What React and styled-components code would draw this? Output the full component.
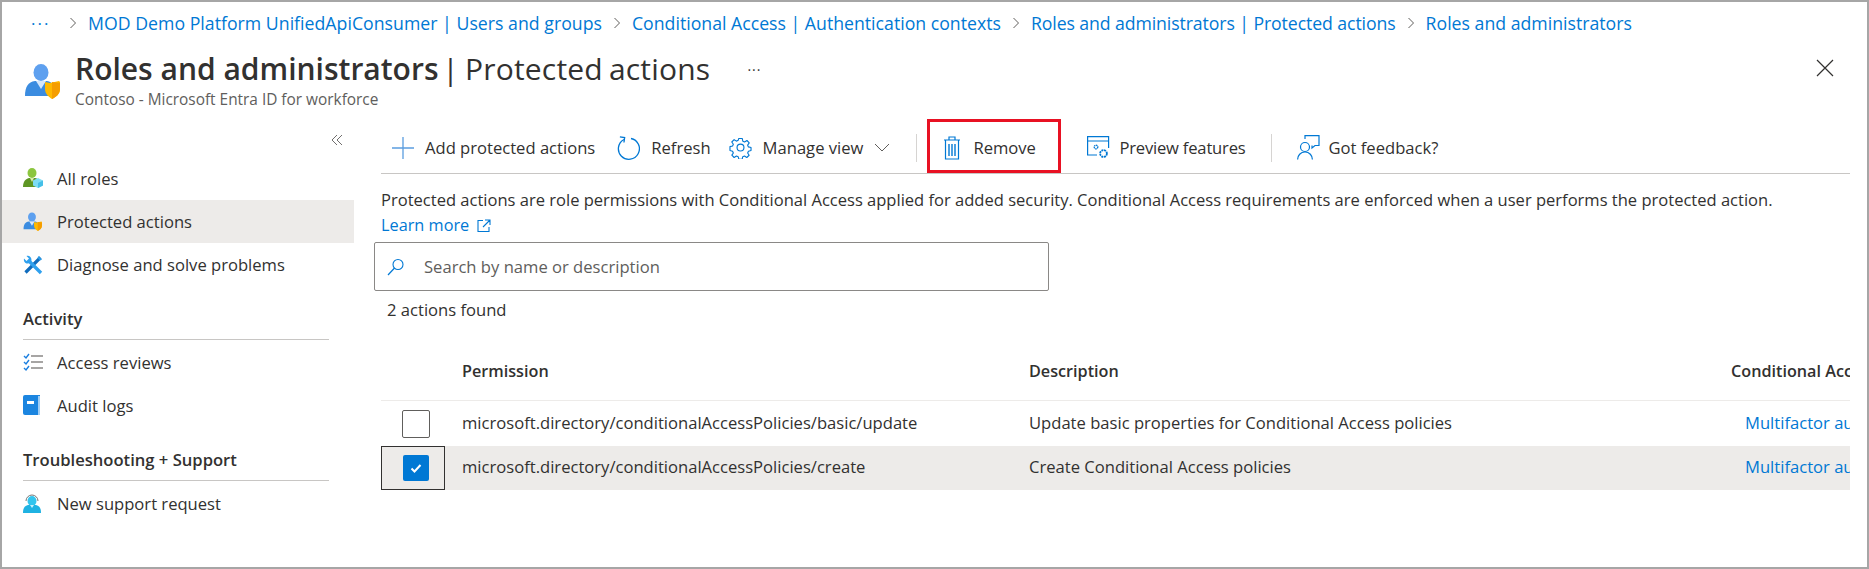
import React from 'react'
import styled, { createGlobalStyle } from 'styled-components'

const GlobalStyle = createGlobalStyle`
  html, body {
    margin: 0;
    padding: 0;
    background: #fff;
  }
  body {
    font-family: "Open Sans", "Liberation Sans", sans-serif;
    font-size: 16.6px;
    color: #323130;
  }
`

const Frame = styled.div`
  box-sizing: border-box;
  width: 1869px;
  height: 569px;
  border: 2px solid #a6a6a6;
  display: flex;
  flex-direction: column;
  overflow: hidden;
  background: #fff;
`

const Breadcrumbs = styled.nav`
  display: flex;
  align-items: center;
  height: 42px;
  padding-left: 29px;
  flex-shrink: 0;
  font-size: 17.7px;
`

const Dots = styled.span`
  color: #0078d4;
  font-size: 17px;
  letter-spacing: 2px;
  line-height: 1;
  width: 27px;
`

const Crumb = styled.a`
  color: #0078d4;
  white-space: nowrap;
  letter-spacing: ${p => p.$track || 0}px;
`

const CrumbSep = styled.span`
  display: flex;
  width: 30px;
  justify-content: center;
  color: #605e5c;
`

const Header = styled.header`
  display: flex;
  align-items: flex-start;
  height: 74px;
  flex-shrink: 0;
  padding-left: 22px;
`

const HeaderIcon = styled.div`
  width: 51px;
  padding-top: 19px;
`

const TitleBlock = styled.div`
  display: flex;
  flex-direction: column;
`

const TitleRow = styled.div`
  display: flex;
  align-items: center;
`

const Title = styled.h1`
  margin: 0;
  font-size: 30px;
  line-height: 50px;
  font-weight: 400;
  color: #323130;
  white-space: nowrap;
`

const Strong = styled.span`
  font-weight: 600;
`

const TitleRest = styled.span`
  margin-left: -4px;
  word-spacing: -2px;
  letter-spacing: 0.2px;
`

const Subtitle = styled.div`
  font-size: 15.4px;
  line-height: 18px;
  margin-top: -3px;
  color: #605e5c;
`

const More = styled.span`
  margin-left: 37px;
  font-size: 14px;
  letter-spacing: 1px;
  color: #323130;
`

const CloseButton = styled.button`
  margin-left: auto;
  margin-right: 33px;
  margin-top: 15px;
  padding: 0;
  border: 0;
  background: none;
  display: flex;
`

const Body = styled.div`
  flex: 1;
  display: flex;
  min-height: 0;
`

const Sidebar = styled.aside`
  width: 352px;
  flex-shrink: 0;
  display: flex;
  flex-direction: column;
`

const Collapse = styled.div`
  display: flex;
  justify-content: flex-end;
  height: 39px;
  padding: 16px 11px 0 0;
  box-sizing: border-box;
`

const NavItem = styled.a`
  display: flex;
  align-items: center;
  height: 43px;
  flex-shrink: 0;
  padding-left: 21px;
  background: ${p => (p.$active ? '#edebe9' : 'transparent')};
  white-space: nowrap;
`

const NavIcon = styled.span`
  display: flex;
  width: 34px;
`

const SectionTitle = styled.div`
  margin: 21px 25px 1px 21px;
  height: 32px;
  border-bottom: 1px solid #c8c6c4;
  font-weight: 600;
  line-height: 24px;
`

const Main = styled.main`
  flex: 1;
  min-width: 0;
  display: flex;
  flex-direction: column;
  padding: 0 17px 0 27px;
`

const Toolbar = styled.div`
  display: flex;
  align-items: center;
  height: 55px;
  margin-top: 1px;
  flex-shrink: 0;
  border-bottom: 1px solid #c8c6c4;
  box-sizing: border-box;
`

const ToolButton = styled.button`
  display: flex;
  align-items: center;
  gap: ${p => p.$gap || 11}px;
  padding: 3px 0 0;
  margin-left: ${p => p.$left || 0}px;
  border: 0;
  background: none;
  font: inherit;
  letter-spacing: ${p => p.$track || 0}px;
  color: #323130;
  white-space: nowrap;
`

const RemoveButton = styled(ToolButton)`
  box-sizing: border-box;
  height: 54px;
  width: 134px;
  padding: 3px 0 0 13px;
  gap: 12px;
  border: 3px solid #e81123;
`

const ToolSep = styled.span`
  width: 1px;
  height: 28px;
  margin-top: 3px;
  background: #d6d4d2;
  margin-left: ${p => p.$left}px;
`

const Description = styled.p`
  margin: 13px 0 0;
  line-height: 25px;
  white-space: nowrap;
  font-size: 16.55px;
`

const Link = styled.a`
  color: #0078d4;
  white-space: nowrap;
`

const LearnMore = styled(Link)`
  display: inline-flex;
  align-items: center;
  gap: 8px;
  font-size: 16.3px;
`

const SearchBox = styled.div`
  box-sizing: border-box;
  display: flex;
  align-items: center;
  gap: 19px;
  width: 675px;
  height: 49px;
  margin: 4px 0 0 -7px;
  padding-left: 12px;
  border: 1px solid #8a8886;
  border-radius: 2px;
  color: #605e5c;
`

const ResultCount = styled.div`
  margin: 7px 0 0 6px;
  line-height: 24px;
`

const Table = styled.div`
  margin-top: 31px;
  overflow: hidden;
`

const Row = styled.div`
  display: grid;
  grid-template-columns: 64px 567px 702px 400px;
  height: ${p => p.$height}px;
  align-items: center;
  white-space: nowrap;
  background: ${p => (p.$selected ? '#edebe9' : 'transparent')};
  box-sizing: border-box;
`

const HeaderRow = styled(Row)`
  border-bottom: 1px solid #edebe9;
  padding-bottom: 12px;
  font-size: 16.2px;
  font-weight: 600;
`

const Cell = styled.div`
  padding-left: 17px;
`

const BodyCell = styled(Cell)`
  margin-bottom: 3px;
`

const LinkCell = styled(BodyCell)`
  padding-left: 31px;
`

const CheckCell = styled.div`
  height: 100%;
  box-sizing: border-box;
  display: flex;
  align-items: center;
  justify-content: center;
  padding-left: 5px;
  border: ${p => (p.$focus ? '1px solid #323130' : '0')};
`

const Checkbox = styled.span`
  box-sizing: border-box;
  display: flex;
  align-items: center;
  justify-content: center;
  width: ${p => (p.$checked ? 26 : 28)}px;
  height: ${p => (p.$checked ? 26 : 28)}px;
  border-radius: 2px;
  background: ${p => (p.$checked ? '#0078d4' : '#fff')};
  border: ${p => (p.$checked ? '0' : '1px solid #605e5c')};
`

const Svg = ({ size = 16, w, h, box, children }) => (
  <svg width={w || size} height={h || size} viewBox={box || `0 0 ${size} ${size}`} fill="none">
    {children}
  </svg>
)

const Chevron = () => (
  <Svg size={12}>
    <path d="M3.500 1l5 5-5 5" stroke="#605e5c" strokeWidth="1" />
  </Svg>
)

const PersonShield = ({ size = 38 }) => (
  <Svg w={size} h={size} box="0 0 38 38">
    <ellipse cx="17" cy="9.500" rx="7.500" ry="8.500" fill="#5ea0ef" />
    <path d="M1 33c0-9 3-14 10-15h12c3 .5 5 2 7 5v10H1z" fill="#3b8ce0" />
    <path d="M12 18h10l-5 8z" fill="#d5e7fb" />
    <path d="M26 20l9-2 1 1v7c0 5-4 8-8 10-3-2-7-5-7-10v-7z" fill="#ffb900" />
    <path d="M28 19l8 1v6c0 5-4 8-8 10z" fill="#f59d00" />
  </Svg>
)

const NavPerson = () => <PersonShield size={20} />

const RolesIcon = () => (
  <Svg w={21} h={21} box="0 0 21 21">
    <ellipse cx="9" cy="5" rx="4.500" ry="5" fill="#8cc63f" />
    <path d="M0 19c0-5 2-8 6-9h6c2 .4 3 1 4 3v6z" fill="#5e9624" />
    <path d="M7 10h4l-2 4z" fill="#d9eeb0" />
    <path d="M15 10l5 2.500v5L15 20l-5-2.500v-5z" fill="#7ddcf5" />
    <path d="M15 15l5-2.500v5L15 20z" fill="#45bfe8" />
  </Svg>
)

const WrenchIcon = () => (
  <Svg w={20} h={20} box="0 0 20 20">
    <path d="M17.500 2.500L2.500 17.500" stroke="#0f6cbd" strokeWidth="3.200" />
    <path d="M15.500 1l3.500 3.500-2 1-2.500-2.500z" fill="#2a9de8" />
    <path d="M6 6l12 12" stroke="#2fa0ee" strokeWidth="3.400" />
    <path d="M1 3.500L3.500 6 6 3.500 3.500 1C6 .200 8.500 2 8.500 5c0 2.500-2.500 4-5 3.500C1.500 8 .300 5.500 1 3.500z" fill="#2fa0ee" />
  </Svg>
)

const ReviewsIcon = () => (
  <Svg w={21} h={19} box="0 0 21 19">
    <path d="M1 3l2 2 3-4M1 9l2 2 3-4M1 15l2 2 3-4" stroke="#1b7fe0" strokeWidth="1.400" />
    <path d="M8 3h12M8 9h12M8 15h12" stroke="#8a8886" strokeWidth="1.600" />
  </Svg>
)

const BookIcon = () => (
  <Svg w={18} h={21} box="0 0 18 21">
    <path d="M2 0h15v20H2a2 2 0 0 1-2-2V2a2 2 0 0 1 2-2z" fill="#1b85e0" />
    <path d="M15 1h2v19h-2z" fill="#9fcdf5" />
    <rect x="4" y="6" width="7" height="3" fill="#fff" />
  </Svg>
)

const SupportIcon = () => (
  <Svg w={18} h={21} box="0 0 18 21">
    <path d="M3 8a6 6 0 0 1 12 0" stroke="#767676" strokeWidth="1" />
    <ellipse cx="9" cy="8" rx="4.500" ry="5" fill="#32c5ee" />
    <path d="M0 20c0-4 1-7 5-8h8c4 1 5 4 5 8z" fill="#1fb2e2" />
    <path d="M7 12h4l-2 3z" fill="#c7f0fb" />
  </Svg>
)

const RefreshIcon = () => (
  <Svg w={24} h={24} box="0 0 24 24">
    <path d="M8 3.500A10.500 10.500 0 1 0 15 2.500" stroke="#0078d4" strokeWidth="1.300" />
    <path d="M3.500 1.500H8.300V6.500" stroke="#0078d4" strokeWidth="1.300" transform="rotate(8 8 4)" />
  </Svg>
)

const GearIcon = () => (
  <Svg w={23} h={23} box="0 0 24 24">
    <circle cx="12" cy="12" r="3.600" stroke="#0078d4" strokeWidth="1.200" />
    <path
      d="M10 1.500h4l.7 3.200 2 .9 2.800-1.700 2.600 2.700-1.800 2.700.9 2 3 .7v3.500l-3 .8-.9 2 1.700 2.700-2.700 2.600-2.700-1.700-2 .8-.7 3h-3.800l-.8-3-2-.8-2.700 1.700-2.600-2.700 1.700-2.600-.9-2-3-.8V11l3-.7.9-2-1.800-2.700 2.700-2.700 2.700 1.700 2-.9z"
      transform="translate(1.200 1.200) scale(.9)"
      stroke="#0078d4"
      strokeWidth="1.300"
      strokeLinejoin="round"
    />
  </Svg>
)

const TrashIcon = () => (
  <Svg w={18} h={24} box="0 0 18 24">
    <path d="M1 4h16M6 4V1h6v3M2.500 4v19h13V4" stroke="#0078d4" strokeWidth="1.200" />
    <path d="M6 8v12M9 8v12M12 8v12" stroke="#0078d4" strokeWidth="1.400" />
  </Svg>
)

const PreviewIcon = () => (
  <Svg w={23} h={24} box="0 0 23 24">
    <path d="M10 19H.600V.600h21V12M1 5h21" stroke="#0078d4" strokeWidth="1.200" />
    <circle cx="9" cy="11" r="1.800" stroke="#0078d4" strokeWidth="1.300" strokeDasharray="1.400 .5" />
    <circle cx="16.500" cy="17.500" r="3.400" stroke="#0078d4" strokeWidth="1.800" strokeDasharray="2 .7" />
  </Svg>
)

const FeedbackIcon = () => (
  <Svg w={23} h={25} box="0 0 23 25">
    <circle cx="8" cy="12" r="4.500" stroke="#0078d4" strokeWidth="1.200" />
    <path d="M.600 24.500c0-4 3-7.500 7.400-7.500s7.400 3.500 7.400 7.500" stroke="#0078d4" strokeWidth="1.200" />
    <path d="M8 4V.600h14V10.500h-4l-3 2.500v-2.500" stroke="#0078d4" strokeWidth="1.200" />
  </Svg>
)

const SearchIcon = () => (
  <Svg size={18}>
    <circle cx="11" cy="6.500" r="5" stroke="#0078d4" strokeWidth="1.100" />
    <path d="M7.500 10L1 17" stroke="#0078d4" strokeWidth="1.200" />
  </Svg>
)

const ExternalIcon = () => (
  <Svg size={14}>
    <path d="M6 1.500H1v11h11V8M8 1h5v5M13 1L6 8" stroke="#0078d4" strokeWidth="1.100" />
  </Svg>
)

const navTop = [
  { label: 'All roles', icon: <RolesIcon /> },
  { label: 'Protected actions', icon: <NavPerson />, active: true },
  { label: 'Diagnose and solve problems', icon: <WrenchIcon /> },
]

const crumbs = [
  { label: 'MOD Demo Platform UnifiedApiConsumer | Users and groups', track: 0.02 },
  { label: 'Conditional Access | Authentication contexts' },
  { label: 'Roles and administrators | Protected actions', track: -0.1 },
  { label: 'Roles and administrators' },
]

const rows = [
  {
    permission: 'microsoft.directory/conditionalAccessPolicies/basic/update',
    description: 'Update basic properties for Conditional Access policies',
  },
  {
    permission: 'microsoft.directory/conditionalAccessPolicies/create',
    description: 'Create Conditional Access policies',
    selected: true,
  },
]

const NavRow = ({ item }) => (
  <NavItem $active={item.active}>
    <NavIcon>{item.icon}</NavIcon>
    {item.label}
  </NavItem>
)

const App = () => (
  <Frame>
    <GlobalStyle />
    <Breadcrumbs>
      <Dots>···</Dots>
      {crumbs.map(c => (
        <React.Fragment key={c.label}>
          <CrumbSep>
            <Chevron />
          </CrumbSep>
          <Crumb $track={c.track}>{c.label}</Crumb>
        </React.Fragment>
      ))}
    </Breadcrumbs>

    <Header>
      <HeaderIcon>
        <PersonShield />
      </HeaderIcon>
      <TitleBlock>
        <TitleRow>
          <Title>
            <Strong>Roles and administrators</Strong> <TitleRest>| Protected actions</TitleRest>
          </Title>
          <More>···</More>
        </TitleRow>
        <Subtitle>Contoso - Microsoft Entra ID for workforce</Subtitle>
      </TitleBlock>
      <CloseButton>
        <Svg size={18}>
          <path d="M1 1l16 16M17 1L1 17" stroke="#323130" strokeWidth="1.200" />
        </Svg>
      </CloseButton>
    </Header>

    <Body>
      <Sidebar>
        <Collapse>
          <Svg size={12}>
            <path d="M6 1L1 6l5 5M11 1L6 6l5 5" stroke="#605e5c" strokeWidth=".9" />
          </Svg>
        </Collapse>
        {navTop.map(item => (
          <NavRow key={item.label} item={item} />
        ))}
        <SectionTitle>Activity</SectionTitle>
        <NavRow item={{ label: 'Access reviews', icon: <ReviewsIcon /> }} />
        <NavRow item={{ label: 'Audit logs', icon: <BookIcon /> }} />
        <SectionTitle>Troubleshooting + Support</SectionTitle>
        <NavRow item={{ label: 'New support request', icon: <SupportIcon /> }} />
      </Sidebar>

      <Main>
        <Toolbar>
          <ToolButton $left={11}>
            <Svg w={22} h={22} box="0 0 22 22">
              <path d="M11 0v22M0 11h22" stroke="#5b9ddf" strokeWidth="1.300" />
            </Svg>
            Add protected actions
          </ToolButton>
          <ToolButton $left={21}>
            <RefreshIcon />
            Refresh
          </ToolButton>
          <ToolButton $left={18}>
            <GearIcon />
            Manage view
            <Svg w={16} h={10} box="0 0 16 10">
              <path d="M1 1l7 7 7-7" stroke="#605e5c" strokeWidth="1" />
            </Svg>
          </ToolButton>
          <ToolSep $left={26} />
          <RemoveButton $left={10}>
            <TrashIcon />
            Remove
          </RemoveButton>
          <ToolButton $left={26} $gap={9} $track={-0.2}>
            <PreviewIcon />
            Preview features
          </ToolButton>
          <ToolSep $left={25} />
          <ToolButton $left={25} $gap={9}>
            <FeedbackIcon />
            Got feedback?
          </ToolButton>
        </Toolbar>

        <Description>
          Protected actions are role permissions with Conditional Access applied for added security. Conditional Access requirements are enforced when a user performs the protected action.
          <br />
          <LearnMore>
            Learn more <ExternalIcon />
          </LearnMore>
        </Description>

        <SearchBox>
          <SearchIcon />
          Search by name or description
        </SearchBox>

        <ResultCount>2 actions found</ResultCount>

        <Table>
          <HeaderRow $height={48}>
            <span />
            <Cell>Permission</Cell>
            <Cell>Description</Cell>
            <Cell>Conditional Access policy</Cell>
          </HeaderRow>
          {rows.map(r => (
            <Row key={r.permission} $selected={r.selected} $height={r.selected ? 44 : 45}>
              <CheckCell $focus={r.selected}>
                <Checkbox $checked={r.selected}>
                  {r.selected && (
                    <Svg size={14}>
                      <path d="M2.500 7.500L5.500 10.500L11.500 4" stroke="#fff" strokeWidth="2" />
                    </Svg>
                  )}
                </Checkbox>
              </CheckCell>
              <BodyCell>{r.permission}</BodyCell>
              <BodyCell>{r.description}</BodyCell>
              <LinkCell>
                <Link>Multifactor authentication</Link>
              </LinkCell>
            </Row>
          ))}
        </Table>
      </Main>
    </Body>
  </Frame>
)

export default App
